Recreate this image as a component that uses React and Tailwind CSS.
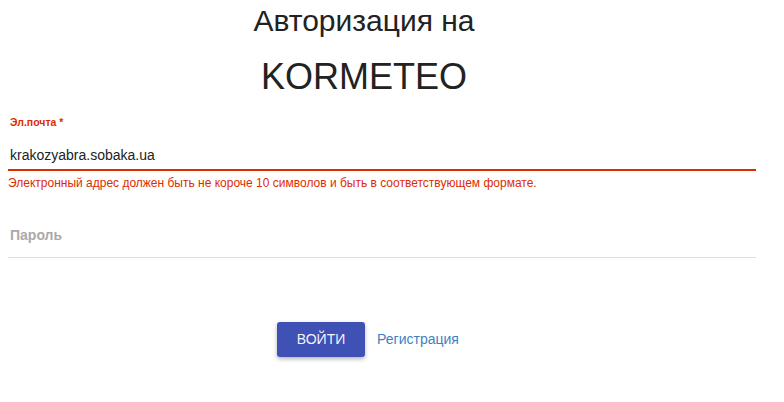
export default function App() {
  return (
    <div
      className="min-h-[402px] bg-white pr-[28px] pl-2 text-[#212121]"
      style={{ fontFamily: '"Liberation Sans", Arial, sans-serif' }}
    >
      <div className="flex flex-col items-center pr-[36px]">
        <h1 className="mt-[1px] text-[30px] leading-[40px] font-normal text-[#222]">
          Авторизация на
        </h1>
        <h2 className="mt-[14px] text-[36px] leading-[44px] font-normal text-[#222]">
          KORMETEO
        </h2>
      </div>

      <div className="mt-[17px]">
        <label className="block px-[2px] text-[10.5px] leading-[12px] font-bold text-[#dd2c00]">
          Эл.почта *
        </label>
        <div className="mt-[17px] border-b-2 border-[#dd2c00] px-[2px] pb-[4px] text-[14px] leading-[20px] text-[#222]">
          krakozyabra.sobaka.ua
        </div>
        <p className="mt-[4px] text-[12px] leading-[16px] text-[#dd2c00]">
          Электронный адрес должен быть не короче 10 символов и быть в соответствующем формате.
        </p>
      </div>

      <div className="mt-[32px] border-b border-[#e0e0e0] px-[2px] pb-[10px]">
        <span className="text-[14px] leading-[20px] font-bold text-[#aaaaaa]">Пароль</span>
      </div>

      <div className="mt-[64px] flex items-center justify-center gap-3 pr-[28px]">
        <button className="h-[35px] w-[88px] rounded-[3px] bg-[#3f51b5] text-[14px] text-white/95 uppercase shadow-[0_2px_4px_rgba(0,0,0,0.3)]">
          Войти
        </button>
        <a className="text-[14px] text-[#3f7fc1]">Регистрация</a>
      </div>
    </div>
  );
}
